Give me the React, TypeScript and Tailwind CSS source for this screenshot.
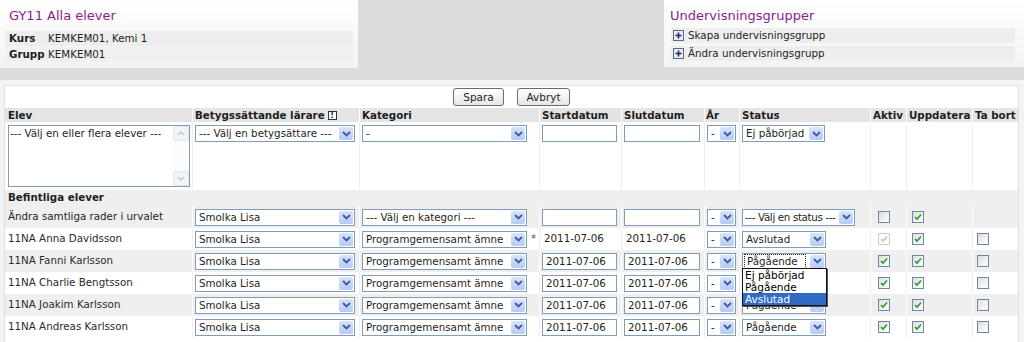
import React from "react";

const COLS = "grid grid-cols-[187px_167px_180px_82px_83px_35px_131px_36px_66px_46px]";

function Arrow() {
  return (
    <span className="mr-px flex h-[13px] w-[14px] shrink-0 items-center justify-center rounded-[2px] bg-linear-to-b from-[#d9e4fc] to-[#b7caf4]">
      <svg width="9" height="6" viewBox="0 0 9 6">
        <path d="M1 1 L4.5 4.5 L8 1" fill="none" stroke="#3c5c9c" strokeWidth="1.8" />
      </svg>
    </span>
  );
}

function Select({ text, w, focus, tight }: { text: string; w: string; focus?: boolean; tight?: boolean }) {
  return (
    <div className={`${w} flex h-[17px] shrink-0 items-center border border-[#7f9db9] bg-white`}>
      {focus ? (
        <span className="ml-px mr-[4px] flex-1 overflow-hidden whitespace-nowrap border border-dotted border-[#222] pl-[2px] leading-[13px]">
          {text}
        </span>
      ) : (
        <span
          className={`flex-1 overflow-hidden whitespace-nowrap leading-[15px] ${
            tight ? "pl-[2px] tracking-[-0.35px]" : "pl-[3px]"
          }`}
        >
          {text}
        </span>
      )}
      <Arrow />
    </div>
  );
}

function Input({ value, w }: { value?: string; w: string }) {
  return (
    <div className={`${w} h-[17px] shrink-0 border border-[#7f9db9] bg-white pl-[3px] leading-[15px]`}>
      {value}
    </div>
  );
}

function Check({ on, disabled }: { on?: boolean; disabled?: boolean }) {
  return (
    <span
      className={`flex h-[12px] w-[12px] items-center justify-center border ${
        disabled ? "border-[#cfcdc2] bg-white" : "border-[#6f86a4] bg-linear-to-br from-[#dedede] to-white"
      }`}
    >
      {on && (
        <svg width="8" height="8" viewBox="0 0 8 8">
          <path d="M1 4 L3 6 L7 1.5" fill="none" stroke={disabled ? "#c6c4b8" : "#21a121"} strokeWidth="1.6" />
        </svg>
      )}
    </span>
  );
}

function Plus() {
  return (
    <svg width="11" height="11" viewBox="0 0 11 11" className="shrink-0">
      <rect x="0.5" y="0.5" width="10" height="10" fill="#e8ebf2" stroke="#5c6a86" />
      <path d="M5.5 2.5 V8.5 M2.5 5.5 H8.5" stroke="#1d2a66" strokeWidth="1.6" />
    </svg>
  );
}

function ListBox() {
  return (
    <div className="flex h-[62px] w-[182px] border border-[#7f9db9] bg-white">
      <div className="flex-1 pl-[1px] pt-[1px] leading-[13px]">--- Välj en eller flera elever ---</div>
      <div className="flex w-[16px] flex-col justify-between bg-[#fbfbfb]">
        <span className="flex h-[15px] items-center justify-center rounded-[2px] border border-[#e3e6ec] bg-[#f1f3f6]">
          <svg width="8" height="5" viewBox="0 0 8 5">
            <path d="M1 4 L4 1 L7 4" fill="none" stroke="#c3c8d2" strokeWidth="1.5" />
          </svg>
        </span>
        <span className="flex h-[15px] items-center justify-center rounded-[2px] border border-[#e3e6ec] bg-[#f1f3f6]">
          <svg width="8" height="5" viewBox="0 0 8 5">
            <path d="M1 1 L4 4 L7 1" fill="none" stroke="#c3c8d2" strokeWidth="1.5" />
          </svg>
        </span>
      </div>
    </div>
  );
}

const students = [
  { name: "11NA Anna Davidsson", status: "Avslutad", locked: true },
  { name: "11NA Fanni Karlsson", status: "Pågående", open: true },
  { name: "11NA Charlie Bengtsson", status: "Pågående" },
  { name: "11NA Joakim Karlsson", status: "Pågående" },
  { name: "11NA Andreas Karlsson", status: "Pågående" },
];

function StatusMenu() {
  return (
    <div className="absolute left-[2px] top-[18px] z-10 w-[85px] border border-[#111] bg-white text-[10.5px] leading-[12px] text-black shadow-[1px_1px_0_#555]">
      <div className="h-[12px] pl-[2px]">Ej påbörjad</div>
      <div className="h-[12px] pl-[2px]">Pågående</div>
      <div className="h-[12px] bg-[#316ac5] pl-[2px] text-white">Avslutad</div>
    </div>
  );
}

export default function App() {
  return (
    <div className="h-[342px] overflow-hidden bg-[#dcdcdc] font-['DejaVu_Sans',sans-serif] text-[10.3px] text-[#1e1e1e]">
      <div className="flex h-[68px]">
        <div className="w-[358px] bg-linear-to-b from-white to-[#f3f3f3]">
          <div className="h-[31px] pl-[9px] pt-[8px] text-[13px] leading-[16px] text-[#8c1d8c]">GY11 Alla elever</div>
          <div className="mx-[5px] flex h-[15px] items-center bg-[#ededed] pl-[4px]">
            <span className="w-[39px] font-bold">Kurs</span>
            <span>KEMKEM01, Kemi 1</span>
          </div>
          <div className="mx-[5px] mt-px flex h-[15px] items-center bg-[#f0f0f0] pl-[4px]">
            <span className="w-[39px] font-bold">Grupp</span>
            <span>KEMKEM01</span>
          </div>
        </div>
        <div className="ml-auto h-[67px] w-[360px] bg-linear-to-b from-white to-[#f3f3f3]">
          <div className="h-[28px] pl-[6px] pt-[8px] text-[13px] leading-[16px] text-[#8c1d8c]">Undervisningsgrupper</div>
          <div className="ml-[7px] mr-[9px] flex h-[15px] items-center gap-[4px] bg-[#eeeeee] pl-[2px]">
            <Plus />
            <span>Skapa undervisningsgrupp</span>
          </div>
          <div className="ml-[7px] mr-[9px] mt-[3px] flex h-[15px] items-center gap-[4px] bg-[#eeeeee] pl-[2px]">
            <Plus />
            <span>Ändra undervisningsgrupp</span>
          </div>
        </div>
      </div>

      <div className="mt-[12px] bg-[#f3f3f3] pl-[4px] pr-[5px] pt-[5px]">
        <div className="border border-b-0 border-[#e0e0e0] bg-white pb-[6px]">
          <div className="flex h-[22px] items-center justify-center gap-[13px]">
            <button className="h-[18px] w-[51px] rounded-[3px] border border-[#6b6b6b] bg-linear-to-b from-white to-[#e6e6e6] text-[10.5px] leading-[16px]">
              Spara
            </button>
            <button className="h-[18px] w-[53px] rounded-[3px] border border-[#6b6b6b] bg-linear-to-b from-white to-[#e6e6e6] text-[10.5px] leading-[16px]">
              Avbryt
            </button>
          </div>

          <div className={`${COLS} h-[14px] bg-[#e4e4e4] font-bold leading-[14px]`}>
            <div className="pl-[3px]">Elev</div>
            <div className="flex items-center border-l border-white pl-[2px]">
              Betygssättande lärare
              <span className="ml-[3px] flex h-[9px] w-[9px] items-center justify-center border border-[#333] bg-white text-[8px] leading-[7px]">
                !
              </span>
            </div>
            <div className="border-l border-white pl-[2px]">Kategori</div>
            <div className="border-l border-white pl-[2px]">Startdatum</div>
            <div className="border-l border-white pl-[2px]">Slutdatum</div>
            <div className="border-l border-white pl-[1px]">År</div>
            <div className="border-l border-white pl-[2px]">Status</div>
            <div className="border-l border-white pl-[2px]">Aktiv</div>
            <div className="border-l border-white pl-[2px]">Uppdatera</div>
            <div className="border-l border-white pl-[2px]">Ta bort</div>
          </div>

          <div className={`${COLS} h-[68px] bg-white`}>
            <div className="pl-[3px] pt-[3px]">
              <ListBox />
            </div>
            <div className="border-l border-[#efefef] pl-[2px] pt-[3px]">
              <Select text="--- Välj en betygsättare ---" w="w-[160px]" />
            </div>
            <div className="border-l border-[#efefef] pl-[2px] pt-[3px]">
              <Select text="-" w="w-[165px]" />
            </div>
            <div className="border-l border-[#efefef] pl-[2px] pt-[3px]">
              <Input w="w-[75px]" />
            </div>
            <div className="border-l border-[#efefef] pl-[2px] pt-[3px]">
              <Input w="w-[76px]" />
            </div>
            <div className="border-l border-[#efefef] pl-[2px] pt-[3px]">
              <Select text="-" w="w-[29px]" />
            </div>
            <div className="border-l border-[#efefef] pl-[2px] pt-[3px]">
              <Select text="Ej påbörjad" w="w-[83px]" />
            </div>
            <div className="border-l border-[#efefef]" />
            <div className="border-l border-[#efefef]" />
            <div className="border-l border-[#efefef]" />
          </div>

          <div className="flex h-[16px] items-center bg-[#efefef] pl-[3px] font-bold">Befintliga elever</div>

          <div className={`${COLS} h-[22px] items-center bg-[#efefef]`}>
            <div className="pl-[3px]">Ändra samtliga rader i urvalet</div>
            <div className="flex h-full items-center border-l border-white pl-[2px]">
              <Select text="Smolka Lisa" w="w-[160px]" />
            </div>
            <div className="flex h-full items-center border-l border-white pl-[2px]">
              <Select text="--- Välj en kategori ---" w="w-[165px]" />
            </div>
            <div className="flex h-full items-center border-l border-white pl-[2px]">
              <Input w="w-[75px]" />
            </div>
            <div className="flex h-full items-center border-l border-white pl-[2px]">
              <Input w="w-[76px]" />
            </div>
            <div className="flex h-full items-center border-l border-white pl-[2px]">
              <Select text="-" w="w-[29px]" />
            </div>
            <div className="flex h-full items-center border-l border-white pl-[2px]">
              <Select text="--- Välj en status ---" w="w-[113px]" tight />
            </div>
            <div className="flex h-full items-center border-l border-white pl-[7px]">
              <Check />
            </div>
            <div className="flex h-full items-center border-l border-white pl-[5px]">
              <Check on />
            </div>
            <div className="h-full border-l border-white" />
          </div>

          {students.map((s, i) => {
            const gray = i % 2 === 1;
            const sep = gray ? "border-white" : "border-[#efefef]";
            const cell = `flex h-full items-center border-l ${sep}`;
            return (
              <div key={s.name} className={`${COLS} h-[22px] items-center ${gray ? "bg-[#efefef]" : "bg-white"}`}>
                <div className="pl-[3px] text-[#2a2a2a]">{s.name}</div>
                <div className={`${cell} pl-[2px]`}>
                  <Select text="Smolka Lisa" w="w-[160px]" />
                </div>
                <div className={`${cell} pl-[2px]`}>
                  <Select text="Programgemensamt ämne" w="w-[165px]" />
                  {s.locked && <span className="ml-[4px] text-[#555]">*</span>}
                </div>
                <div className={`${cell} pl-[2px]`}>
                  {s.locked ? <span className="pl-[2px]">2011-07-06</span> : <Input value="2011-07-06" w="w-[75px]" />}
                </div>
                <div className={`${cell} pl-[2px]`}>
                  {s.locked ? <span className="pl-[2px]">2011-07-06</span> : <Input value="2011-07-06" w="w-[76px]" />}
                </div>
                <div className={`${cell} pl-[2px]`}>
                  <Select text="-" w="w-[29px]" />
                </div>
                <div className={`${cell} relative pl-[2px]`}>
                  <Select text={s.status} w="w-[84px]" focus={s.open} />
                  {s.open && <StatusMenu />}
                </div>
                <div className={`${cell} pl-[7px]`}>
                  <Check on disabled={s.locked} />
                </div>
                <div className={`${cell} pl-[5px]`}>
                  <Check on />
                </div>
                <div className={`${cell} pl-[4px]`}>
                  <Check />
                </div>
              </div>
            );
          })}
        </div>
      </div>
    </div>
  );
}
